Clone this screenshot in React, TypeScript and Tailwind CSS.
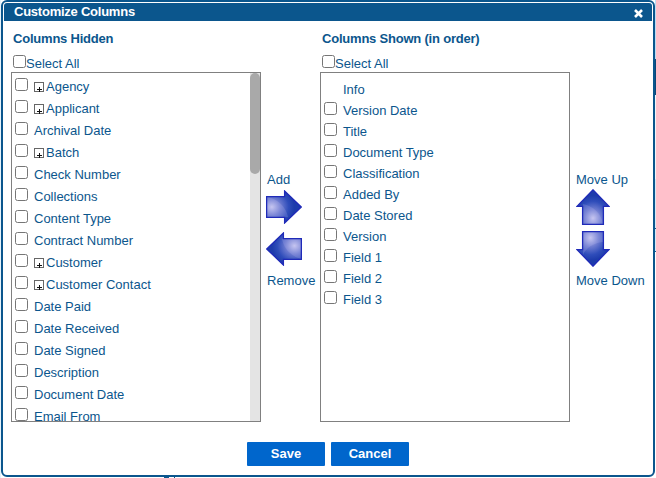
import React from "react";

type Column = { name: string; group?: boolean; fixed?: boolean };

const hiddenColumns: Column[] = [
  { name: "Agency", group: true },
  { name: "Applicant", group: true },
  { name: "Archival Date" },
  { name: "Batch", group: true },
  { name: "Check Number" },
  { name: "Collections" },
  { name: "Content Type" },
  { name: "Contract Number" },
  { name: "Customer", group: true },
  { name: "Customer Contact", group: true },
  { name: "Date Paid" },
  { name: "Date Received" },
  { name: "Date Signed" },
  { name: "Description" },
  { name: "Document Date" },
  { name: "Email From" },
];

const shownColumns: Column[] = [
  { name: "Info", fixed: true },
  { name: "Version Date" },
  { name: "Title" },
  { name: "Document Type" },
  { name: "Classification" },
  { name: "Added By" },
  { name: "Date Stored" },
  { name: "Version" },
  { name: "Field 1" },
  { name: "Field 2" },
  { name: "Field 3" },
];

function Checkbox() {
  return (
    <input
      type="checkbox"
      className="block h-[13px] w-[13px] shrink-0 appearance-none rounded-[2.5px] border border-[#767676] bg-white"
    />
  );
}

function Expander() {
  return (
    <svg className="mt-[4px] mr-[2px] block h-[10px] w-[10px] shrink-0" viewBox="0 0 10 10" shapeRendering="crispEdges">
      <rect x="0.5" y="0.5" width="9" height="9" fill="#fff" stroke="#666" />
      <path d="M3 7.5h5M5.5 5v5" stroke="#111" />
    </svg>
  );
}

type Direction = "right" | "left" | "up" | "down";

const arrowShapes: Record<Direction, { w: number; h: number; d: string; shine: string; fx: string; fy: string }> = {
  right: {
    w: 36,
    h: 34,
    d: "M.6 6.6H18.6V1L35.2 17 18.6 33V27.4H.6Z",
    shine: "M1 7C12 9 20 17 22 27H1Z",
    fx: "15%",
    fy: "50%",
  },
  left: {
    w: 36,
    h: 34,
    d: "M35.4 6.6H17.4V1L.8 17 17.4 33V27.4H35.4Z",
    shine: "M16 7H35V27C25 24 18 17 16 7Z",
    fx: "80%",
    fy: "40%",
  },
  up: {
    w: 34,
    h: 36,
    d: "M6.6 35.4V17.4H1L17 .8 33 17.4H27.4V35.4Z",
    shine: "M7 15C17 17 25 24 27 35H7Z",
    fx: "50%",
    fy: "82%",
  },
  down: {
    w: 34,
    h: 36,
    d: "M6.6 .6V18.6H1L17 35.2 33 18.6H27.4V.6Z",
    shine: "M7 1H27V11C17 12 10 17 7 24Z",
    fx: "42%",
    fy: "18%",
  },
};

function Arrow({ direction }: { direction: Direction }) {
  const a = arrowShapes[direction];
  const id = `fill-${direction}`;
  return (
    <svg width={a.w} height={a.h} viewBox={`0 0 ${a.w} ${a.h}`} className="block">
      <defs>
        <radialGradient id={id} cx={a.fx} cy={a.fy} r="65%">
          <stop offset="0" stopColor="#c3c3ee" />
          <stop offset="0.4" stopColor="#6d7bd0" />
          <stop offset="0.75" stopColor="#2f4dba" />
          <stop offset="1" stopColor="#1d3bab" />
        </radialGradient>
      </defs>
      <path d={a.d} fill={`url(#${id})`} />
      <path d={a.shine} fill="#d9d6ff" opacity="0.16" />
      <path d={a.d} fill="none" stroke="#1f2ab8" strokeWidth="1.3" />
    </svg>
  );
}

function SelectAll() {
  return (
    <label className="flex h-[17px] pl-[2px]">
      <Checkbox />
      <span className="mt-px leading-[15px]">Select All</span>
    </label>
  );
}

export default function App() {
  return (
    <div className="flex h-[478px] w-[656px] overflow-hidden bg-white font-['Liberation_Sans',Arial,sans-serif] text-[13px] text-[#0b568d]">
      <div className="w-px shrink-0 bg-[#e6f3fb]" />
      <div className="flex h-[478px] w-[654px] shrink-0 flex-col">
        <div className="flex h-[477px] flex-col rounded-[6px] border-2 border-[#0b568d] bg-white px-px pt-px">
          <header className="flex h-[18px] shrink-0 items-center justify-between rounded-t-[3px] bg-[#0b568d] pr-[9px] pl-[10px] font-bold text-white">
            <span className="leading-[18px] tracking-[-0.24px]">Customize Columns</span>
            <svg width="9" height="9" viewBox="0 0 9 9" className="mt-[2px]">
              <path d="M1 1l7 7M8 1L1 8" stroke="#fff" strokeWidth="2.6" />
            </svg>
          </header>

          <main className="flex h-[401px] shrink-0 pt-[10px] pl-[7px]">
            <section className="w-[250px] shrink-0">
              <h2 className="h-[24px] pl-[2px] leading-[15px] font-bold tracking-[-0.21px]">Columns Hidden</h2>
              <SelectAll />
              <div className="flex h-[350px] justify-between overflow-hidden border border-[#808080]">
                <ul className="pt-[5px] pl-[3px]">
                  {hiddenColumns.map((c) => (
                    <li key={c.name} className="flex h-[22px]">
                      <Checkbox />
                      <div className="ml-[6px] flex">
                        {c.group && <Expander />}
                        <span className="mt-px leading-[15px] whitespace-nowrap">{c.name}</span>
                      </div>
                    </li>
                  ))}
                </ul>
                <div className="w-[10px] shrink-0 bg-[#e4e4e4]">
                  <div className="h-[101px] rounded-[5px] bg-[#a9a9a9]" />
                </div>
              </div>
            </section>

            <div className="flex w-[59px] shrink-0 flex-col pt-[141px] pl-[5px] whitespace-nowrap">
              <span className="h-[18px] pl-px leading-[15px]">Add</span>
              <Arrow direction="right" />
              <div className="h-[8px]" />
              <Arrow direction="left" />
              <span className="mt-[7px] pl-px leading-[15px]">Remove</span>
            </div>

            <section className="w-[250px] shrink-0">
              <h2 className="h-[24px] pl-[2px] leading-[15px] font-bold tracking-[-0.21px]">Columns Shown (in order)</h2>
              <SelectAll />
              <div className="h-[350px] border border-[#808080]">
                <ul className="pt-[8px] pl-[3px]">
                  {shownColumns.map((c) => (
                    <li key={c.name} className="flex h-[21px]">
                      {c.fixed ? <span className="w-[13px]" /> : <Checkbox />}
                      <span className="mt-px ml-[6px] leading-[15px]">{c.name}</span>
                    </li>
                  ))}
                </ul>
              </div>
            </section>

            <div className="flex shrink-0 flex-col pt-[141px] pl-[6px] whitespace-nowrap">
              <span className="h-[17px] leading-[15px]">Move Up</span>
              <Arrow direction="up" />
              <div className="h-[6px]" />
              <Arrow direction="down" />
              <span className="mt-[6px] leading-[15px]">Move Down</span>
            </div>
          </main>

          <footer className="flex gap-[6px] pt-[20px] pl-[243px]">
            <button className="h-[24px] w-[78px] rounded-[1px] bg-[#0066cc] text-[13px] leading-[24px] font-bold text-white">Save</button>
            <button className="h-[24px] w-[78px] rounded-[1px] bg-[#0066cc] text-[13px] leading-[24px] font-bold text-white">Cancel</button>
          </footer>
        </div>
        <div className="flex h-px pl-[163px]">
          <span className="w-[5px] bg-[#0b568d]" />
          <span className="ml-[5px] w-px bg-[#0b568d]" />
        </div>
      </div>
      <div className="flex w-px shrink-0 flex-col bg-white">
        <div className="h-[59px] bg-[#b9def5]" />
        <div className="h-[36px] bg-[#0b4778]" />
        <div className="h-[84px] bg-[#eef7fc]" />
        <div className="h-[49px] bg-[#d4ebf8]" />
        <div className="h-px bg-[#0b568d]" />
        <div className="h-[22px] bg-[#d4ebf8]" />
        <div className="h-px bg-[#0b568d]" />
      </div>
    </div>
  );
}
